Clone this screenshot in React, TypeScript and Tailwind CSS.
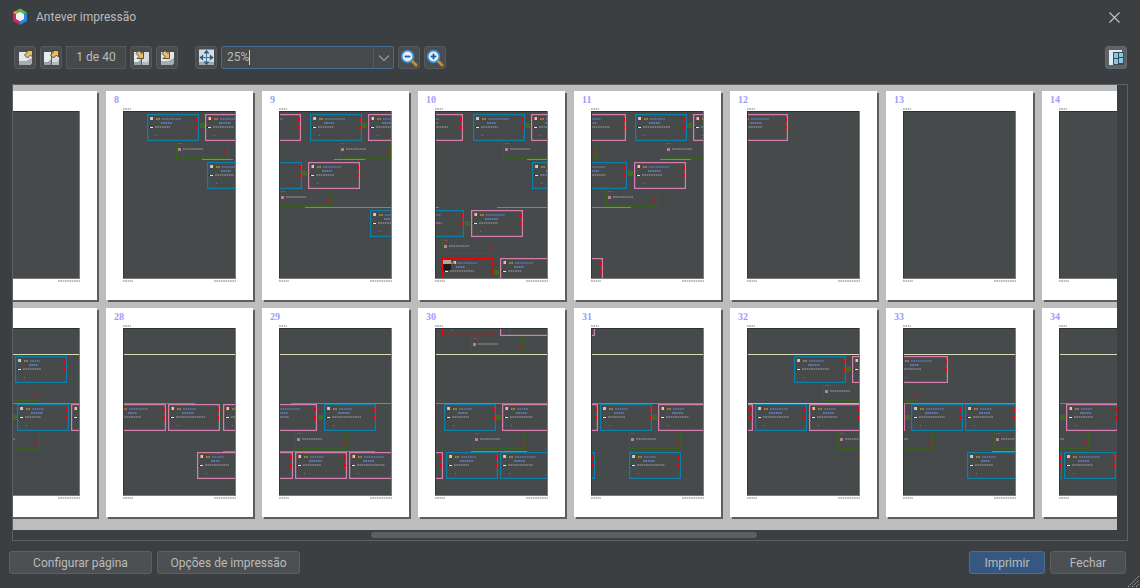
const font = { fontFamily: 'Roboto, "Noto Sans", sans-serif' };

type Card = [string, number, number];
type PageData = {
  n: number;
  cards?: Card[];
  nets?: [number, number, number?][];
  links?: [number, number][];
  lines?: [number, number, number][];
  guides?: boolean;
};

const colors: Record<string, string> = {
  b: '#0f7fa8',
  p: '#d27fae',
  r: '#f00000',
};

const row1: PageData[] = [
  { n: 7 },
  {
    n: 8,
    cards: [['b', 24, 3], ['p', 82, 3], ['b', 84, 51]],
    nets: [[53, 30]],
    links: [[77, 12]],
    lines: [[79, 110, 48]],
  },
  {
    n: 9,
    cards: [['p', -30, 3], ['b', 31, 3], ['p', 89, 3], ['b', -29, 51], ['p', 29, 51], ['b', 91, 99]],
    nets: [[60, 30], [0, 78]],
    links: [[83, 12], [23, 60]],
    lines: [[55, 86, 48], [26, 113, 96]],
  },
  {
    n: 10,
    cards: [['p', -24, 3], ['b', 38, 3], ['p', 96, 3], ['b', 97, 51], ['b', -23, 99], ['p', 36, 99], ['r', 7, 147], ['p', 65, 147]],
    nets: [[68, 30], [7, 127, 16]],
    links: [[90, 12], [30, 110], [59, 159]],
    lines: [[92, 113, 48], [0, 4, 96], [62, 113, 96]],
  },
  {
    n: 11,
    cards: [['p', -17, 3], ['b', 44, 3], ['p', 102, 3], ['b', -16, 51], ['p', 43, 51], ['p', -40, 147]],
    nets: [[-46, 30], [74, 30], [15, 78]],
    links: [[96, 12], [37, 60]],
    lines: [[69, 100, 48], [0, 40, 96]],
  },
  { n: 12, cards: [['p', -11, 3]] },
  { n: 13 },
  { n: 14 },
];

const row2: PageData[] = [
  {
    n: 27,
    guides: true,
    cards: [['b', 48, 28], ['b', 50, 76], ['p', 104, 76]],
    nets: [[19, 55], [21, 103]],
    links: [[46, 87]],
    lines: [[0, 113, 75]],
  },
  {
    n: 28,
    guides: true,
    cards: [['p', -9, 76], ['p', 45, 76], ['p', 100, 76], ['p', 74, 124]],
    lines: [[0, 72, 75], [100, 113, 123]],
  },
  {
    n: 29,
    guides: true,
    cards: [['p', -14, 76], ['b', 45, 76], ['p', -38, 124], ['p', 16, 124], ['p', 70, 124]],
    nets: [[16, 103]],
    links: [[39, 87]],
    lines: [[12, 113, 75], [0, 96, 123]],
  },
  {
    n: 30,
    guides: true,
    cards: [['r', 7, -19], ['p', 65, -19], ['b', 9, 76], ['p', 67, 76], ['p', -44, 124], ['b', 11, 124], ['b', 65, 124]],
    nets: [[36, 8], [38, 103]],
    links: [[61, 87]],
    lines: [[0, 113, 75], [36, 92, 123]],
  },
  {
    n: 31,
    guides: true,
    cards: [['p', -48, -19], ['p', -45, 76], ['b', 9, 76], ['p', 67, 76], ['b', -48, 124], ['b', 38, 124]],
    nets: [[38, 103]],
    links: [[61, 87]],
    lines: [[0, 113, 75]],
  },
  {
    n: 32,
    guides: true,
    cards: [['b', 47, 28], ['p', 105, 28], ['p', -46, 76], ['b', 8, 76], ['p', 62, 76]],
    nets: [[76, 55], [91, 103]],
    links: [[99, 39]],
    lines: [[0, 113, 75]],
  },
  {
    n: 33,
    guides: true,
    cards: [['p', -7, 28], ['p', -50, 76], ['b', 8, 76], ['b', 62, 76], ['b', 64, 124]],
    nets: [[-37, 55], [-22, 103], [91, 103]],
    links: [[2, 87]],
    lines: [[0, 113, 75], [89, 113, 123]],
  },
  {
    n: 34,
    guides: true,
    cards: [['b', -51, 76], ['p', 7, 76], ['b', -49, 124], ['b', 5, 124]],
    nets: [[-22, 103]],
    links: [[1, 87]],
    lines: [[0, 113, 75]],
  },
];

// page text is too small to read at 25%, so it is only a soft mark
function Greek({ x, y, w, c = '#9a9a9a', h = 1.5 }: { x: number; y: number; w: number; c?: string; h?: number }) {
  return (
    <line
      x1={x}
      x2={x + w}
      y1={y}
      y2={y}
      stroke={c}
      strokeWidth={h}
      strokeDasharray="1.7 0.6"
      opacity={0.75}
      shapeRendering="auto"
    />
  );
}

function MiniCard({ kind, x, y }: { kind: string; x: number; y: number }) {
  const seed = Math.abs(x * 7 + y * 3);
  const name = 10 + (seed % 12);
  const sub = 9 + (seed % 5);
  const info = 14 + (seed % 16);
  return (
    <g>
      <rect
        x={x + 0.6}
        y={y + 0.6}
        width={50.8}
        height={25.8}
        fill="none"
        stroke={colors[kind]}
        strokeWidth={1.25}
        shapeRendering="auto"
      />
      {kind === 'r' && <rect x={x + 1} y={y + 2} width={8} height={10} fill="#1c1c1c" />}
      {kind === 'r' && <rect x={x + 1} y={y + 2} width={8} height={4} fill="#a8a8a8" />}
      <rect x={x + (kind === 'r' ? 11 : 3)} y={y + 3} width={3} height={3} fill="#efc39a" />
      <rect x={x + (kind === 'r' ? 11 : 3)} y={y + 3} width={1} height={3} fill={kind === 'b' ? '#8cc4e8' : '#d86a50'} />
      <Greek x={x + 9} y={y + 5} w={4} c="#c0902a" h={2} />
      <Greek x={x + 15} y={y + 5} w={name} c="#6a88c8" />
      <Greek x={x + 14} y={y + 9} w={sub} c="#6486d4" h={2} />
      <rect x={x + 3} y={y + 12.5} width={3} height={1} fill="#e8e8e8" />
      <rect x={x + 2} y={y + 12.5} width={1} height={1} fill="#111" />
      <Greek x={x + 8} y={y + 13} w={info} />
      <rect x={x + 9} y={y + 21} width={1} height={1} fill="#777" />
      <rect x={x + 49} y={y + 4} width={2} height={3} fill="#f00000" />
      <rect x={x + 49} y={y + 12} width={2} height={3} fill="#f00000" />
    </g>
  );
}

function Sheet({ page }: { page: PageData }) {
  return (
    <svg width="113" height="178" viewBox="0 -4 113 178" className="ml-[17px] block" shapeRendering="crispEdges">
      <Greek x={0} y={-2} w={8} c="#8a8a8a" />
      <Greek x={0} y={170} w={10} c="#8a8a8a" />
      <Greek x={91} y={170} w={22} c="#8a8a8a" />
      <svg x="0" y="0" width="113" height="168" viewBox="0 0 113 168">
        <rect width="113" height="168" fill="#464a4b" />
        {page.guides && <rect x="0" y="26" width="113" height="1" fill="#d9dcb8" />}
        {(page.lines || []).map(([a, b, y], i) => (
          <rect key={i} x={a} y={y} width={b - a} height="1" fill={y === 75 && page.n === 32 ? '#c9b9a8' : '#83857a'} />
        ))}
        {(page.nets || []).map(([x, y, h = 18], i) => (
          <g key={i}>
            <path d={`M${x + 0.5} ${y}V${y + h - 0.5}H${x + 51.5}V${y}`} fill="none" stroke="#3a5f20" />
            <rect x={x + 2} y={y + 2} width={4} height={1} fill="#9c4040" />
            <rect x={x + 2} y={y + 7} width={3} height={3} fill="#b88098" />
            <Greek x={x + 7} y={y + 8} w={20} />
            <rect x={x + 48} y={y + 10} width={2} height={2} fill="#f00000" />
          </g>
        ))}
        {(page.links || []).map(([x, y], i) => (
          <rect key={i} x={x} y={y} width={5} height={5} fill="#3f6a20" />
        ))}
        {(page.cards || []).map(([k, x, y], i) => (
          <MiniCard key={i} kind={k} x={x} y={y} />
        ))}
        <rect x="0" y="0" width="113" height="1" fill="#2e3032" />
        <rect x="0" y="0" width="1" height="168" fill="#35383a" />
        <rect x="112" y="0" width="1" height="168" fill="#7a7a7a" />
        <rect x="0" y="167" width="113" height="1" fill="#7a7a7a" />
      </svg>
    </svg>
  );
}

function Page({ page }: { page: PageData }) {
  // pages 7 and 27 are scrolled so far left that their number is out of view
  const showNumber = page.n !== 7 && page.n !== 27;
  return (
    <div className="w-[147px] h-[209px] shrink-0 bg-white shadow-[2px_2px_0_#5e5e5e]">
      <div
        className="h-[16px] pl-[8px] pt-[3px] text-[10px] leading-[12px] font-bold text-[#9c9cff]"
        style={{ fontFamily: '"Liberation Serif", serif' }}
      >
        {showNumber && page.n}
      </div>
      <Sheet page={page} />
    </div>
  );
}

function ToolButton({ children, active }: { children: React.ReactNode; active?: boolean }) {
  return (
    <button
      className={`w-[22px] h-[23px] shrink-0 flex items-center justify-center rounded-[3px] border ${
        active ? 'bg-[#5e6264] border-[#636769]' : 'bg-[#4a4d4f] border-[#565a5c]'
      }`}
    >
      {children}
    </button>
  );
}

function NavIcon({ kind }: { kind: 'first' | 'prev' | 'next' | 'last' }) {
  const back = kind === 'first' || kind === 'prev';
  const book = kind === 'prev' || kind === 'next';
  return (
    <svg width="17" height="16" viewBox="0 0 17 16">
      {book ? (
        <g>
          <path d="M1 2H8V15H1Z" fill="#e6ebed" />
          <path d="M9 2H16V15H9Z" fill="#d5dbde" />
          <path d="M1 12H5L8 9V15H1Z" fill="#9aa1a4" />
          <path d="M9 12H14L16 10V15H9Z" fill="#b3babd" />
          <path d="M8 2H9V15H8Z" fill="#5a5e60" />
        </g>
      ) : (
        <g>
          <path d="M2 2H15V13L13 15H3L2 14Z" fill="#e3e8ea" />
          <path d="M2 11H9L15 8V13L13 15H3L2 14Z" fill="#a6adb0" />
        </g>
      )}
      {back ? (
        <path d="M15.5 0.5V7L13.5 5 10.5 8 7.5 5 10.5 2 9 0.5Z" fill="#e8bc63" stroke="#3a3222" strokeWidth="0.8" />
      ) : (
        <path d="M10.5 8.5H4L6 6.5 3 3.5 6 0.5 9 3.5 10.5 2Z" fill="#e8bc63" stroke="#3a3222" strokeWidth="0.8" />
      )}
    </svg>
  );
}

function FitIcon() {
  return (
    <svg width="17" height="17" viewBox="0 0 17 17">
      <rect x="1" y="0.5" width="15" height="15.5" fill="#cfdde8" />
      <path d="M1 13H16V16H1Z" fill="#9fa9b0" />
      <path d="M8.5 3V14M3 8.5H14" stroke="#4a7796" strokeWidth="1" />
      <g fill="#2f5f80">
        <path d="M8.5 0.8 11.5 4.6H5.5Z" />
        <path d="M8.5 16.2 5.5 12.4H11.5Z" />
        <path d="M1.3 8.5 5.1 5.5V11.5Z" />
        <path d="M15.7 8.5 11.9 11.5V5.5Z" />
      </g>
    </svg>
  );
}

function ZoomIcon({ plus }: { plus?: boolean }) {
  return (
    <svg width="18" height="18" viewBox="0 0 18 18">
      <path d="M11 11 16 16" stroke="#c98d22" strokeWidth="3" strokeLinecap="round" />
      <circle cx="7.5" cy="7.5" r="5.8" fill="#e6f1fa" stroke="#3f8fd0" strokeWidth="1.8" />
      <path d="M4.6 7.5H10.4" stroke="#1f5da0" strokeWidth="1.8" />
      {plus && <path d="M7.5 4.6V10.4" stroke="#1f5da0" strokeWidth="1.8" />}
    </svg>
  );
}

function LayoutIcon() {
  return (
    <svg width="17" height="17" viewBox="0 0 17 17">
      <rect x="1" y="1" width="13" height="15" fill="#dcebf3" />
      <rect x="5" y="3" width="11" height="13" fill="#33505f" />
      <g fill="#8cc6de">
        <rect x="6" y="4" width="4" height="5" />
        <rect x="11" y="4" width="4" height="4" />
        <rect x="6" y="10" width="4" height="5" />
        <rect x="11" y="9" width="4" height="5" />
      </g>
    </svg>
  );
}

function Logo() {
  return (
    <svg width="16" height="18" viewBox="0 0 16 18">
      <path d="M8 0.5 15 4.5 8 8 1 4.5Z" fill="#62b456" />
      <path d="M1 4.5 4 3 8 8 5 9.5Z" fill="#e8a33d" />
      <path d="M1 4.5 8 8.5V17L1 13Z" fill="#d3265f" />
      <path d="M15 4.5 8 8.5V17L15 13Z" fill="#2c88d8" />
      <path d="M8 4 12 6.3V11L8 13.3 4 11V6.3Z" fill="#f1f1f1" />
    </svg>
  );
}

function FooterButton({ label, primary, w }: { label: string; primary?: boolean; w: string }) {
  return (
    <button
      className={`block ${w} h-[23px] rounded-[3px] border text-[12px] leading-[20px] text-[#bbbbbb] ${
        primary ? 'bg-[#365880] border-[#4c708c]' : 'bg-[#4c5052] border-[#5e6060]'
      }`}
    >
      {label}
    </button>
  );
}

export default function App() {
  return (
    <div className="relative w-[1140px] h-[588px] bg-[#3c3f41] flex flex-col overflow-hidden" style={font}>
      {/* title bar */}
      <div className="h-[34px] flex items-center pl-[12px] pr-[19px] shrink-0">
        <Logo />
        <span className="ml-[8px] text-[12px] text-[#bbbbbb]">Antever impressão</span>
        <svg width="13" height="13" viewBox="0 0 13 13" className="ml-auto">
          <path d="M1.5 1.5 11.5 11.5M11.5 1.5 1.5 11.5" stroke="#c4c4c4" strokeWidth="1.1" />
        </svg>
      </div>

      {/* toolbar */}
      <div className="mt-[12px] h-[23px] flex items-center pl-[14px] pr-[13px] shrink-0">
        <ToolButton><NavIcon kind="first" /></ToolButton>
        <div className="ml-[4px]"><ToolButton><NavIcon kind="prev" /></ToolButton></div>
        <div className="ml-[4px] w-[60px] h-[23px] border border-[#55595b] bg-[#45494a] text-[12px] leading-[21px] text-center text-[#bbbbbb]">
          1 de 40
        </div>
        <div className="ml-[4px]"><ToolButton><NavIcon kind="next" /></ToolButton></div>
        <div className="ml-[4px]"><ToolButton><NavIcon kind="last" /></ToolButton></div>
        <div className="ml-[17px]"><ToolButton><FitIcon /></ToolButton></div>
        <div className="ml-[4px] w-[173px] h-[23px] flex rounded-[2px] border border-[#466d94] bg-[#45494a] text-[12px] leading-[21px] text-[#bbbbbb]">
          <div className="flex-1 pl-[5px] flex items-center">
            25%<span className="w-px h-[15px] bg-[#d0d0d0]" />
          </div>
          <div className="w-[20px] border-l border-[#55595b] flex items-center justify-center">
            <svg width="12" height="8" viewBox="0 0 12 8">
              <path d="M1 1.5 6 6.5 11 1.5" fill="none" stroke="#9a9da0" strokeWidth="1.1" />
            </svg>
          </div>
        </div>
        <div className="ml-[4px]"><ToolButton><ZoomIcon /></ToolButton></div>
        <div className="ml-[4px]"><ToolButton><ZoomIcon plus /></ToolButton></div>
        <div className="ml-auto"><ToolButton active><LayoutIcon /></ToolButton></div>
      </div>

      {/* preview */}
      <div className="mt-[15px] ml-[12px] w-[1116px] h-[457px] shrink-0 border border-[#5e6163]">
        <div className="w-[1104px] h-[445px] bg-[#bdbdbd] overflow-hidden pt-[6px] flex flex-col gap-[8px]">
          <div className="flex gap-[9px] -ml-[63px]">
            {row1.map((p) => <Page key={p.n} page={p} />)}
          </div>
          <div className="flex gap-[9px] -ml-[63px]">
            {row2.map((p) => <Page key={p.n} page={p} />)}
          </div>
        </div>
        <div className="ml-[358px] mt-[2px] w-[386px] h-[6px] rounded-[3px] bg-[#5a6062]" />
      </div>

      {/* footer */}
      <div className="mt-[10px] flex pl-[9px] pr-[14px] shrink-0">
        <FooterButton label="Configurar página" w="w-[143px]" />
        <div className="ml-[5px]"><FooterButton label="Opções de impressão" w="w-[143px]" /></div>
        <div className="ml-auto"><FooterButton label="Imprimir" primary w="w-[76px]" /></div>
        <div className="ml-[5px]"><FooterButton label="Fechar" w="w-[76px]" /></div>
      </div>

      {/* resize grip */}
      <svg width="13" height="13" viewBox="0 0 13 13" className="absolute right-0 bottom-0">
        <path d="M1 12 12 1M5 12 12 5M9 12 12 9" stroke="#b0b0b0" strokeWidth="1" strokeDasharray="1.4 1" />
      </svg>
    </div>
  );
}
